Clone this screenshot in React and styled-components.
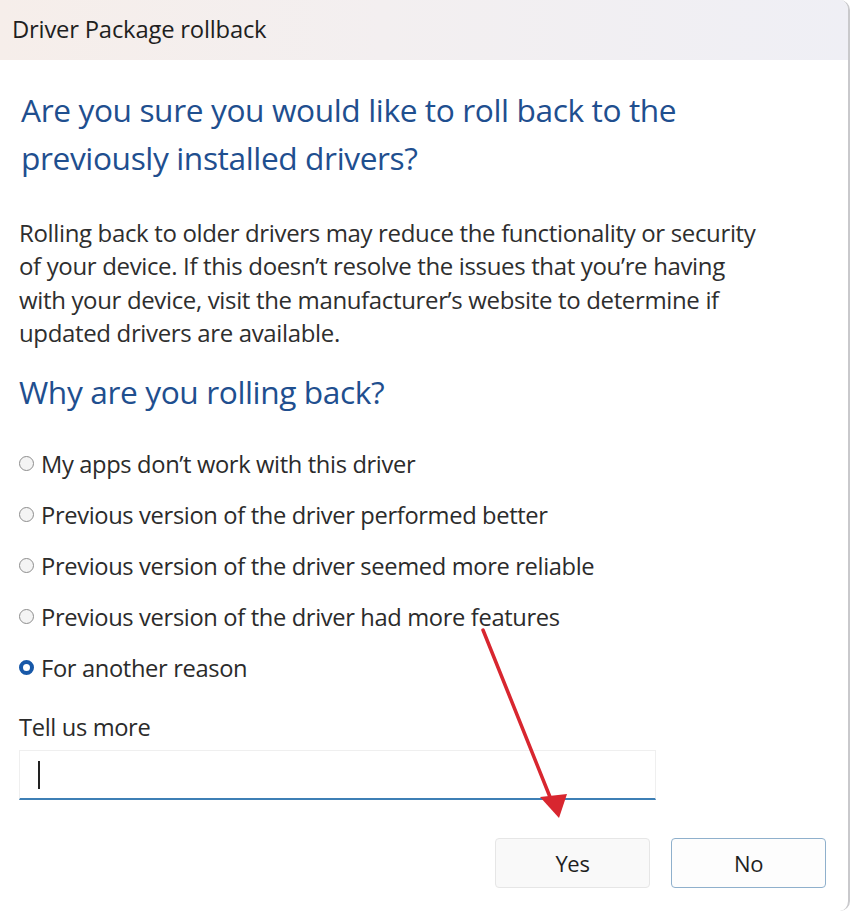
import React, { useState } from 'react'
import styled, { createGlobalStyle } from 'styled-components'

const GlobalStyle = createGlobalStyle`
  html, body {
    margin: 0;
    padding: 0;
    background: #ffffff;
  }
  body {
    font-family: "Open Sans", "Noto Sans", "Liberation Sans", sans-serif;
    color: #2b2b2b;
  }
`

const reasons = [
  'My apps don’t work with this driver',
  'Previous version of the driver performed better',
  'Previous version of the driver seemed more reliable',
  'Previous version of the driver had more features',
  'For another reason',
]

const Window = styled.div`
  position: relative;
  width: 850px;
  height: 911px;
  box-sizing: border-box;
  background: #ffffff;
  border-right: 2px solid #c9c9cc;
  border-top-right-radius: 10px;
  border-bottom-right-radius: 10px;
  overflow: hidden;
  display: flex;
  flex-direction: column;
`

const TitleBar = styled.div`
  height: 58px;
  padding-bottom: 2px;
  flex-shrink: 0;
  display: flex;
  align-items: center;
  padding-left: 12px;
  background: linear-gradient(90deg, #f6eeea 0%, #f3eff0 45%, #efeff5 100%);
  font-size: 23.8px;
  color: #1f1f1f;
  letter-spacing: -0.2px;
`

const Body = styled.div`
  padding: 26px 0 0 19px;
  display: flex;
  flex-direction: column;
`

const Heading = styled.h1`
  margin: 0;
  font-weight: 400;
  font-size: 31.7px;
  line-height: 48px;
  color: #1f4f8f;
  letter-spacing: -0.4px;
  padding-left: ${p => p.$indent || 0}px;
  max-width: ${p => p.$max || 700}px;
`

const Paragraph = styled.p`
  margin: 34px 0 19px;
  font-size: 24px;
  line-height: 33.3px;
  color: #2e2e2e;
  letter-spacing: -0.35px;
  max-width: 745px;
`

const Options = styled.div`
  margin-top: 22px;
  display: flex;
  flex-direction: column;
`

const Option = styled.label`
  height: 51px;
  display: flex;
  align-items: center;
  gap: 7px;
  font-size: 23.7px;
  color: #2b2b2b;
  letter-spacing: -0.35px;
  cursor: pointer;
`

const Dot = styled.span`
  width: 15px;
  height: 15px;
  box-sizing: border-box;
  border-radius: 50%;
  flex-shrink: 0;
  border: ${p => (p.$on ? '4px solid #1758a8' : '1.5px solid #8d8d8d')};
  background: ${p => (p.$on ? '#ffffff' : '#f4f4f4')};
`

const Label = styled.div`
  margin-top: 18px;
  font-size: 23.7px;
  line-height: 33px;
  color: #2b2b2b;
  letter-spacing: -0.35px;
`

const Field = styled.div`
  margin-top: 6px;
  width: 637px;
  height: 50px;
  box-sizing: border-box;
  border: 1px solid #efefef;
  border-bottom: 2px solid #3d7fb5;
  display: flex;
  align-items: center;
  padding-left: 18px;
`

const Caret = styled.span`
  width: 2px;
  height: 28px;
  background: #222;
`

const Buttons = styled.div`
  margin-top: 38px;
  display: flex;
  justify-content: flex-end;
  gap: 21px;
  padding-right: 22px;
`

const Button = styled.button`
  width: 155px;
  height: 50px;
  box-sizing: border-box;
  font-family: inherit;
  font-size: 22px;
  color: #1f1f1f;
  letter-spacing: -0.3px;
  background: ${p => (p.$primary ? '#fdfdfd' : '#f9f9f9')};
  border: ${p => (p.$primary ? '1.5px solid #8fb0cc' : '1px solid #e6e6e6')};
  border-radius: 4px;
`

const Arrow = styled.svg`
  position: absolute;
  left: 0;
  top: 0;
  pointer-events: none;
`

export default function App() {
  const [choice, setChoice] = useState(4)
  return (
    <>
      <GlobalStyle />
      <Window>
        <TitleBar>Driver Package rollback</TitleBar>
        <Body>
          <Heading $indent={2}>
            Are you sure you would like to roll back to the previously installed drivers?
          </Heading>
          <Paragraph>
            Rolling back to older drivers may reduce the functionality or security of your device. If this doesn’t resolve the issues that you’re having with your device, visit the manufacturer’s website to determine if updated drivers are available.
          </Paragraph>
          <Heading>Why are you rolling back?</Heading>
          <Options>
            {reasons.map((r, i) => (
              <Option key={r} onClick={() => setChoice(i)}>
                <Dot $on={choice === i} />
                {r}
              </Option>
            ))}
          </Options>
          <Label>Tell us more</Label>
          <Field>
            <Caret />
          </Field>
          <Buttons>
            <Button>Yes</Button>
            <Button $primary>No</Button>
          </Buttons>
        </Body>
        <Arrow width="850" height="911" viewBox="0 0 850 911">
          <line x1="483" y1="630" x2="552" y2="802" stroke="#d8262f" strokeWidth="3.5" strokeLinecap="round" />
          <polygon points="559,818 540,797 567,794" fill="#d8262f" />
        </Arrow>
      </Window>
    </>
  )
}
